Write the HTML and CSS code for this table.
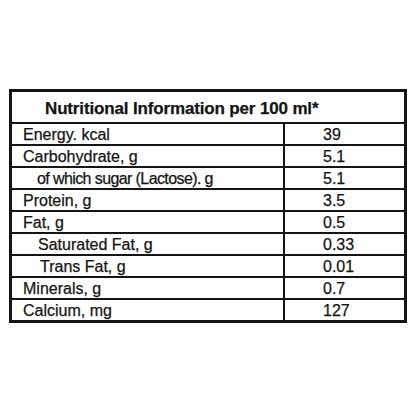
FILE: index.html
```
<!DOCTYPE html>
<html>
<head>
<meta charset="utf-8">
<link rel="stylesheet" href="styles.css">
</head>
<body>
<div class="panel">
  <div class="label">
    <div class="head">Nutritional Information per 100 ml*</div>
    <div class="row"><div class="name">Energy. kcal</div><div class="val">39</div></div>
    <div class="row"><div class="name">Carbohydrate, g</div><div class="val">5.1</div></div>
    <div class="row"><div class="name sub">of which sugar (Lactose). g</div><div class="val">5.1</div></div>
    <div class="row"><div class="name">Protein, g</div><div class="val">3.5</div></div>
    <div class="row"><div class="name">Fat, g</div><div class="val">0.5</div></div>
    <div class="row"><div class="name sub2">Saturated Fat, g</div><div class="val">0.33</div></div>
    <div class="row"><div class="name sub3">Trans Fat, g</div><div class="val">0.01</div></div>
    <div class="row"><div class="name">Minerals, g</div><div class="val">0.7</div></div>
    <div class="row last"><div class="name">Calcium, mg</div><div class="val">127</div></div>
  </div>
</div>
</body>
</html>
```
FILE: styles.css
```
html, body {
  margin: 0;
  padding: 0;
  background: #fff;
}
body {
  font-family: "Liberation Sans", Arial, sans-serif;
  color: #141414;
  -webkit-text-stroke: 0.25px #141414;
}
.panel {
  width: 416px;
  height: 416px;
  padding: 89px 0 0 9px;
  box-sizing: border-box;
}
.label {
  width: 398px;
  box-sizing: border-box;
  border: 3px solid #151515;
}
.head {
  height: 31.5px;
  box-sizing: border-box;
  padding: 3px 0 0 33px;
  font-size: 17px;
  font-weight: bold;
  line-height: 28px;
  letter-spacing: -0.15px;
  border-bottom: 2px solid #151515;
}
.row {
  display: grid;
  grid-template-columns: 273px 117px;
  height: 22px;
  box-sizing: border-box;
  border-bottom: 2px solid #151515;
  font-size: 16px;
  line-height: 20px;
}
.row.last {
  border-bottom: none;
  height: 20.5px;
}
.name {
  padding: 1px 0 0 11px;
  border-right: 2px solid #151515;
  white-space: nowrap;
}
.name.sub { padding-left: 25px; letter-spacing: -0.6px; }
.name.sub2 { padding-left: 26px; }
.name.sub3 { padding-left: 28px; }
.val {
  padding: 1px 0 0 38px;
}
```
